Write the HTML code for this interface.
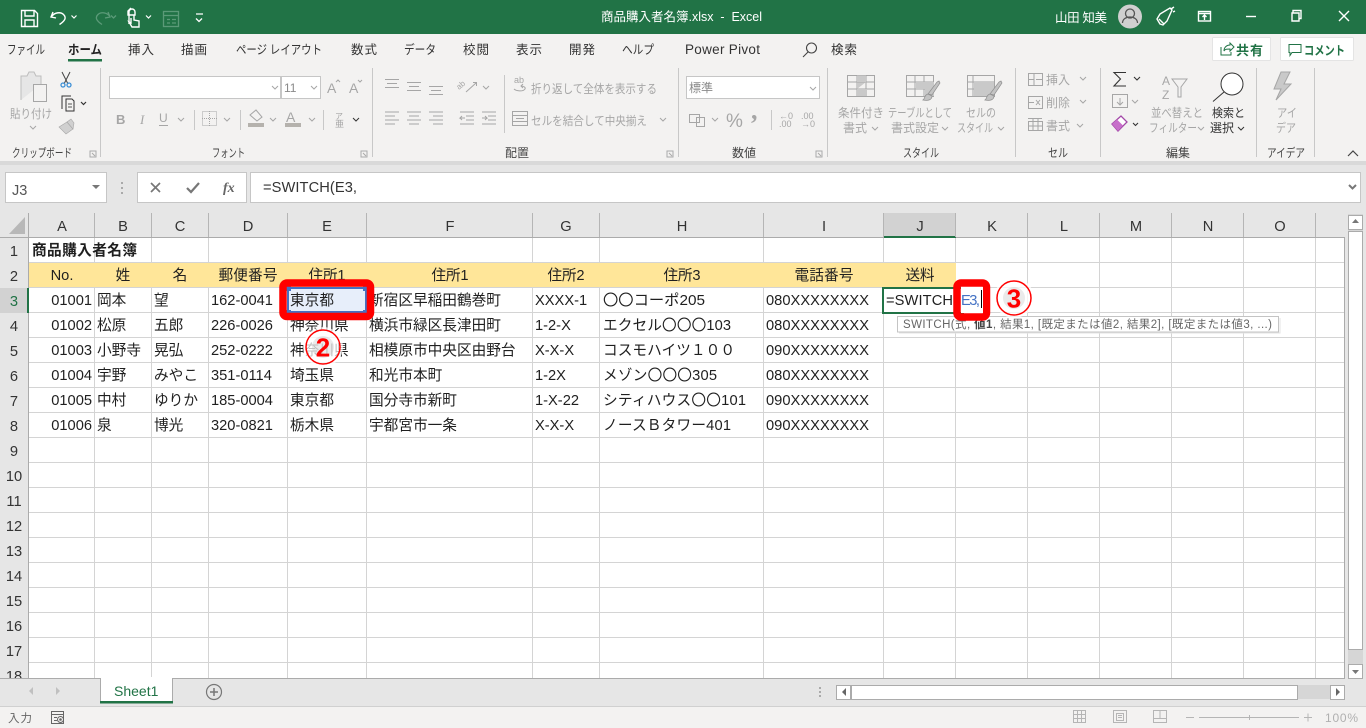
<!DOCTYPE html>
<html lang="ja"><head><meta charset="utf-8"><title>商品購入者名簿.xlsx - Excel</title>
<style>
html,body{margin:0;padding:0;background:#e6e6e6;overflow:hidden}
svg{display:block;position:absolute;left:0;top:0}
text{font-family:"Liberation Sans","Noto Sans CJK JP",sans-serif;white-space:pre}
.c text{font-size:14.67px;fill:#1f1f1f}
.r{font-size:12px;fill:#a6a6a6}
.k{font-size:12px;fill:#333}
.tab{font-size:12.5px;fill:#333}
.g{font-size:12px;fill:#444}
.h{font-size:14.67px;fill:#333;text-anchor:middle}
.ic{fill:none;stroke:#a6a6a6;stroke-width:1}
.wl{fill:none;stroke:#fff;stroke-width:1.4}
</style></head><body>
<svg width="1366" height="728" viewBox="0 0 1366 728" xmlns="http://www.w3.org/2000/svg">
<!-- backgrounds -->
<rect width="1366" height="728" fill="#e6e6e6"/>
<rect width="1366" height="34" fill="#217346"/>
<rect y="34" width="1366" height="127" fill="#f3f2f1"/>
<rect y="161" width="1366" height="4" fill="#d9d9d9"/>

<!-- QAT -->
<g class="wl">
<path d="M21.5 10.5h13l3 3v13h-16z"/><path d="M25 10.5v5.500h9v-5.500M25 26.500v-6.500h9v6.500"/>
<path d="M53 12l-2 5 5 1M51.500 16.500c3-4 9-5 12-2 3 3 2 6-4 10"/>
<path d="M71.500 15.500l2.500 2.500 2.500-2.500" stroke-width="1.200"/>
<path d="M129 24v-12a3 3 0 0 1 6 0v3h-7v-4l3-3M131 18v5l-2-1 3 5h7v-6l-5-1v-5"/>
<path d="M146 15.500l2.500 2.500 2.500-2.500" stroke-width="1.200"/>
<path d="M196 14h7M196 18.500l3 3 3-3" stroke-width="1.300"/>
</g>
<g fill="none" stroke="#5b9a78" stroke-width="1.300">
<path d="M108 12l2 5-5 1M110 16.500c-3-4-9-5-12-2-3 3-2 6 4 10"/>
<path d="M111 15.500l2.500 2.500 2.500-2.500"/>
<rect x="163.500" y="11.500" width="15" height="15"/><path d="M163.500 15.500h15M167 19.500h3M172 19.500h4M167 23h3M172 23h4"/>
</g>

<!-- Title -->
<text x="601" y="21" font-size="12.500" fill="#fff" textLength="161">商品購入者名簿.xlsx  -  Excel</text>
<text x="1055" y="22" font-size="12.500" fill="#fff" textLength="52">山田 知美</text>
<circle cx="1130" cy="16.500" r="12" fill="#d0d0d0"/>
<g fill="none" stroke="#555" stroke-width="1.300"><circle cx="1130" cy="13.500" r="4.500"/><path d="M1122.500 23c0-8 15-8 15 0"/></g>
<g class="wl">
<path d="M1160 24l3 1 4-4 5-11-2-2-10 6-3 5zM1159 19l5 5M1171 9l3-2M1173 12l2-1"/>
<rect x="1198.500" y="11.500" width="12" height="9.500"/><path d="M1198.500 13.500h12M1204.500 20v-5M1202.500 17l2-2 2 2"/>
<path d="M1246 16.500h10"/>
<path d="M1293 13v-2.500h8v8h-2.500M1293 13h6v8h-7v-8z"/>
<path d="M1339 11l10 10M1349 11l-10 10"/>
</g>

<!-- Tabs -->
<g class="tab">
<text x="7" y="54" textLength="38" lengthAdjust="spacingAndGlyphs">ファイル</text>
<text x="68" y="54" textLength="34" lengthAdjust="spacingAndGlyphs" font-weight="700" style="fill:#222">ホーム</text>
<text x="128" y="54" textLength="26">挿入</text>
<text x="181" y="54" textLength="26">描画</text>
<text x="236" y="54" textLength="86" lengthAdjust="spacingAndGlyphs">ページ レイアウト</text>
<text x="351" y="54" textLength="26">数式</text>
<text x="404" y="54" textLength="32" lengthAdjust="spacingAndGlyphs">データ</text>
<text x="463" y="54" textLength="26">校閲</text>
<text x="516" y="54" textLength="26">表示</text>
<text x="569" y="54" textLength="26">開発</text>
<text x="622" y="54" textLength="32" lengthAdjust="spacingAndGlyphs">ヘルプ</text>
<text x="685" y="54" textLength="75" style="font-size:13.5px">Power Pivot</text>
<text x="831" y="54" textLength="26">検索</text>
</g>
<rect x="68" y="59" width="34" height="2.500" fill="#217346"/>
<circle cx="811.500" cy="48" r="5" fill="none" stroke="#444" stroke-width="1.100"/><path d="M808 52l-5 5" stroke="#444" stroke-width="1.100"/>

<!-- Share/comment -->
<rect x="1212.500" y="37.500" width="58" height="23" rx="1" fill="#fff" stroke="#e4e4e4"/>
<rect x="1280.500" y="37.500" width="73" height="23" rx="1" fill="#fff" stroke="#e4e4e4"/>
<g fill="none" stroke="#217346" stroke-width="1"><path d="M1221 47v8h10v-3M1224 51c0-4 3-6 6-6v-2l4 4-4 4v-2c-3 0-5 0-6 2z"/><path d="M1289 44.500h12v8h-9l-2 3v-3h-1z"/></g>
<text x="1236" y="55" font-size="13" font-weight="700" fill="#217346" textLength="27">共有</text>
<text x="1304" y="55" font-size="12.500" font-weight="700" fill="#217346" textLength="41" lengthAdjust="spacingAndGlyphs">コメント</text>

<!-- Ribbon separators -->
<g fill="#c8c8c8">
<rect x="100" y="68" width="1" height="89"/><rect x="372" y="68" width="1" height="89"/><rect x="678" y="68" width="1" height="89"/><rect x="827" y="68" width="1" height="89"/><rect x="1015" y="68" width="1" height="89"/><rect x="1100" y="68" width="1" height="89"/><rect x="1256" y="68" width="1" height="89"/><rect x="1314" y="68" width="1" height="89"/>
<rect x="194" y="110" width="1" height="20"/><rect x="240" y="110" width="1" height="20"/><rect x="323" y="110" width="1" height="20"/><rect x="504" y="75" width="1" height="58"/><rect x="771" y="110" width="1" height="20"/>
</g>
<!-- Group labels -->
<g class="g">
<text x="12" y="157" textLength="60" lengthAdjust="spacingAndGlyphs">クリップボード</text>
<text x="212" y="157" textLength="33" lengthAdjust="spacingAndGlyphs">フォント</text>
<text x="505" y="157" textLength="24">配置</text>
<text x="732" y="157" textLength="24">数値</text>
<text x="903" y="157" textLength="36" lengthAdjust="spacingAndGlyphs">スタイル</text>
<text x="1048" y="157" textLength="20" lengthAdjust="spacingAndGlyphs">セル</text>
<text x="1166" y="157" textLength="24">編集</text>
<text x="1267" y="157" textLength="38" lengthAdjust="spacingAndGlyphs">アイデア</text>
</g>
<g fill="none" stroke="#aaa" stroke-width="1"><path d="M90 151h6v6h-6zM92 153l3 3"/><path d="M361 151h6v6h-6zM363 153l3 3"/><path d="M667 151h6v6h-6zM669 153l3 3"/><path d="M816 151h6v6h-6zM818 153l3 3"/></g>
<path d="M1348 156l5-5 5 5" fill="none" stroke="#444" stroke-width="1.200"/>

<!-- Clipboard -->
<g class="ic"><path d="M21 100V76h6l2-4h5l2 4h5v8" fill="#e6e6e6" stroke="#bdbdbd"/><rect x="33.500" y="84.500" width="13" height="17" fill="#f3f2f1" stroke="#a6a6a6"/></g>
<text x="10" y="118" class="r" textLength="42" lengthAdjust="spacingAndGlyphs">貼り付け</text>
<path d="M30 126l3 3 3-3" class="ic"/>
<g fill="none" stroke="#444"><path d="M62 72l6 12M70 72l-6 12"/></g>
<circle cx="63" cy="85" r="2" fill="none" stroke="#3c8fd6" stroke-width="1.300"/><circle cx="69" cy="85" r="2" fill="none" stroke="#3c8fd6" stroke-width="1.300"/>
<g fill="none" stroke="#333"><path d="M62 109V96h9M66 99h6l2 2v10h-8z"/><path d="M68 104h4M68 107h4" stroke="#555"/><path d="M81 102l2.500 2.500 2.500-2.500" stroke-width="1.200"/></g>
<g fill="#d0d0d0" stroke="#a6a6a6" stroke-width=".6"><path d="M59 127l8-5 6 7-7 5z"/><path d="M67 122l4-3 3 4-1 6z"/></g>

<!-- Font -->
<rect x="109.500" y="76.500" width="171" height="22" fill="#fff" stroke="#c6c6c6"/>
<rect x="281.500" y="76.500" width="39" height="22" fill="#fff" stroke="#c6c6c6"/>
<path d="M272 86l3 3 3-3M311 86l3 3 3-3" class="ic"/>
<text x="284" y="92" font-size="12" fill="#8a8a8a">11</text>
<text x="327" y="93" font-size="14" fill="#a6a6a6">A</text><text x="349" y="93" font-size="14" fill="#a6a6a6">A</text>
<path d="M336 82l2-2 2 2M358 80l2 2 2-2" class="ic"/>
<text x="116" y="124" font-size="13" font-weight="700" fill="#a6a6a6">B</text>
<text x="140" y="124" fill="#a6a6a6" style="font:italic 13px 'Liberation Serif',serif">I</text>
<text x="159" y="122" font-size="12" fill="#a6a6a6">U</text><path d="M159 125.500h9M178 118l3 3 3-3" class="ic"/>
<rect x="202.500" y="111.500" width="14" height="14" fill="none" stroke="#a6a6a6" stroke-dasharray="1 1"/><path d="M202 118.500h15M209.500 111v15" stroke="#a6a6a6" stroke-dasharray="1 1"/>
<path d="M224 118l3 3 3-3" class="ic"/>
<path d="M250 115l6-5 6 7-5 4z" class="ic"/><rect x="248" y="123" width="16" height="4" fill="#b5b2ad"/>
<path d="M270 118l3 3 3-3M309 118l3 3 3-3" class="ic"/>
<text x="286" y="122" font-size="14" fill="#a6a6a6">A</text><rect x="285" y="123" width="16" height="4" fill="#b5b2ad"/>
<text x="335" y="119" font-size="8" fill="#a6a6a6">ア</text><text x="335" y="127" font-size="9" fill="#a6a6a6">亜</text>
<path d="M353 118l3 3 3-3" fill="none" stroke="#333"/>

<!-- Alignment -->
<g class="ic">
<path d="M385 79.500h14M387 83.500h10M385 87.500h14M407 82.500h14M409 86.500h10M407 90.500h14M429 86.500h14M431 90.500h10M429 94.500h14"/>
<path d="M385 112h14M385 116h10M385 120h14M385 124h10M407 112h14M409 116h10M407 120h14M409 124h10M429 112h14M433 116h10M429 120h14M433 124h10"/>
<path d="M466 92l10-9M473 82.500h3.500v3.500M483 86l3 3 3-3"/>
<path d="M460 112h14M466 116h8M466 120h8M460 124h14M465 118h-5l2-2M462 120l-2-2M482 112h14M488 116h8M488 120h8M482 124h14M482 118h5l-2-2M485 120l2-2"/>
<rect x="512.500" y="111.500" width="15" height="14"/><path d="M512 115.500h15M512 121.500h15M516 118.500h8"/>
<path d="M514 89c2 2 9 3 11 0 1-2-2-3-4-3M523 84l-2 2 2 2"/>
<path d="M660 118l3 3 3-3"/>
</g>
<text x="514" y="83" font-size="9" fill="#a6a6a6">ab</text>
<text x="459" y="90" font-size="8" fill="#a6a6a6" transform="rotate(-40 459 90)">ab</text>
<text x="531" y="93" class="r" textLength="126" lengthAdjust="spacingAndGlyphs">折り返して全体を表示する</text>
<text x="531" y="125" class="r" textLength="116" lengthAdjust="spacingAndGlyphs">セルを結合して中央揃え</text>

<!-- Number -->
<rect x="686.500" y="76.500" width="133" height="22" fill="#fff" stroke="#c6c6c6"/>
<text x="689" y="92" font-size="12" fill="#8a8a8a">標準</text>
<path d="M810 87l3 3 3-3M712 118l3 3 3-3" class="ic"/>
<g class="ic"><rect x="689.500" y="114.500" width="10" height="8"/><rect x="696.500" y="117.500" width="8" height="9"/></g>
<text x="726" y="127" font-size="19" fill="#a6a6a6">%</text>
<text x="751" y="119" fill="#a6a6a6" style="font:700 26px 'Liberation Serif',serif">,</text>
<text x="779" y="119" font-size="9" fill="#a6a6a6">←0</text><text x="779" y="127" font-size="9" fill="#a6a6a6">.00</text>
<text x="801" y="119" font-size="9" fill="#a6a6a6">.00</text><text x="801" y="127" font-size="9" fill="#a6a6a6">→0</text>

<!-- Styles -->
<g stroke="#a6a6a6" fill="none">
<rect x="847.500" y="75.500" width="27" height="21"/><path d="M847 82h28M847 89h28M857 75v22M866 75v22"/>
<path d="M857 75.500h9v7h-9zM857 89h9v7h-9zM866 82h-9v7" fill="#c9c9c9" stroke="none"/><rect x="862" y="89" width="5" height="7" fill="#c9c9c9" stroke="none"/>
<rect x="906.500" y="75.500" width="27" height="21"/><path d="M906 82h28M906 89h28M915 75v22M924 75v22"/>
<rect x="925" y="82" width="9" height="14" fill="#c9c9c9" stroke="none"/><rect x="916" y="82" width="9" height="7" fill="#c9c9c9" stroke="none"/>
<rect x="967.500" y="75.500" width="27" height="21"/><path d="M967 82h28M967 89h10M973 75v22"/>
<rect x="974" y="82" width="20" height="14" fill="#c9c9c9" stroke="none"/>
</g>
<g fill="#c3c3c3" stroke="#8f8f8f" stroke-width=".7">
<path d="M928 94l9-12 2-1 1 2-8 12z"/><path d="M923 100c2-1 1-5 5-6l4 2c0 4-4 5-9 4z"/>
<path d="M990 94l9-12 2-1 1 2-8 12z"/><path d="M985 100c2-1 1-5 5-6l4 2c0 4-4 5-9 4z"/>
</g>
<g class="r">
<text x="838" y="117" textLength="46" lengthAdjust="spacingAndGlyphs">条件付き</text><text x="843" y="132" textLength="24">書式</text>
<text x="888" y="117" textLength="64" lengthAdjust="spacingAndGlyphs">テーブルとして</text><text x="891" y="132" textLength="48">書式設定</text>
<text x="966" y="117" textLength="30" lengthAdjust="spacingAndGlyphs">セルの</text><text x="957" y="132" textLength="36" lengthAdjust="spacingAndGlyphs">スタイル</text>
</g>
<path d="M872 127l3 3 3-3M942 127l3 3 3-3M998 127l3 3 3-3" class="ic"/>

<!-- Cells -->
<g class="ic">
<rect x="1028.500" y="73.500" width="14" height="12"/><path d="M1028 79.500h6M1036 79.500h6M1034 73v13"/>
<rect x="1028.500" y="96.500" width="14" height="12"/><path d="M1028 102.500h6M1036 100l4 5M1040 100l-4 5"/>
<rect x="1028.500" y="121.500" width="14" height="9"/><path d="M1028 118.500h14M1033 118v13M1038 118v13M1028 126h14"/>
<path d="M1080 77l3 3 3-3M1080 100l3 3 3-3M1077 124l3 3 3-3"/>
</g>
<g class="r">
<text x="1046" y="84" textLength="24">挿入</text><text x="1046" y="107" textLength="24">削除</text><text x="1046" y="130" textLength="24">書式</text>
</g>

<!-- Editing -->
<path d="M1126 72.500h-12l6.500 6.500-6.500 7h12" fill="none" stroke="#333" stroke-width="1.100"/>
<path d="M1134 77l3 3 3-3M1133 123l2.500 2.500 2.500-2.500" fill="none" stroke="#333" stroke-width="1.100"/>
<rect x="1112.500" y="94.500" width="15" height="13" class="ic" stroke="#999"/><path d="M1120 98v7M1117 102l3 3 3-3" class="ic"/><path d="M1132 100l3 3 3-3" class="ic"/>
<path d="M1112 124l9-8 6 6-9 9z" fill="#fff" stroke="#a348a8" stroke-width="1.300"/><path d="M1112 124l5-4.500 6 6-5 5.500z" fill="#c76fca"/>
<text x="1162" y="85" font-size="12" fill="#a6a6a6">A</text><text x="1162" y="99" font-size="12" fill="#a6a6a6">Z</text>
<path d="M1172 79h15l-6 8v10h-3V87z" class="ic"/>
<text x="1151" y="117" class="r" textLength="52" lengthAdjust="spacingAndGlyphs">並べ替えと</text><text x="1149" y="132" class="r" textLength="48" lengthAdjust="spacingAndGlyphs">フィルター</text>
<path d="M1198 127l3 3 3-3" class="ic"/>
<circle cx="1232" cy="84" r="11" fill="#fff" stroke="#333"/><path d="M1224 92l-11 9.500" stroke="#333"/>
<text x="1212" y="117" class="k" textLength="33" lengthAdjust="spacingAndGlyphs">検索と</text><text x="1210" y="132" class="k" textLength="24">選択</text>
<path d="M1238 127l3 3 3-3" fill="none" stroke="#333"/>
<!-- Ideas -->
<path d="M1290 72h-9l-7 17h7l-5 11 15-16h-7l6-12z" fill="#c9c9c9" stroke="#a6a6a6"/>
<text x="1277" y="117" class="r" textLength="20" lengthAdjust="spacingAndGlyphs">アイ</text><text x="1276" y="132" class="r" textLength="20" lengthAdjust="spacingAndGlyphs">デア</text>

<!-- Formula bar -->
<rect x="5.500" y="172.500" width="101" height="30" fill="#fff" stroke="#c6c6c6"/>
<text x="12" y="195" font-size="14.500" fill="#555">J3</text>
<path d="M92 185h8l-4 4z" fill="#777"/>
<g fill="#aaa"><rect x="121" y="182" width="2" height="2"/><rect x="121" y="187" width="2" height="2"/><rect x="121" y="192" width="2" height="2"/></g>
<rect x="137.500" y="172.500" width="109" height="30" fill="#fff" stroke="#c6c6c6"/>
<rect x="250.500" y="172.500" width="1110" height="30" fill="#fff" stroke="#c6c6c6"/>
<path d="M151 183l9 9M160 183l-9 9" stroke="#777" stroke-width="1.700"/>
<path d="M187 188l4 4 8-9" fill="none" stroke="#777" stroke-width="2.200"/>
<text x="223" y="192" fill="#666" style="font:italic 700 14px 'Liberation Serif',serif">fx</text>
<text x="263" y="192" font-size="14.670" fill="#333" textLength="94">=SWITCH(E3,</text>
<path d="M1349 185l3.500 3.500 3.500-3.500" fill="none" stroke="#777" stroke-width="2"/>

<!-- Column & row headers -->
<rect x="29" y="213" width="1317" height="25" fill="#e6e6e6"/>
<rect x="884" y="213" width="72" height="25" fill="#d2d2d2"/>
<rect x="0" y="288" width="29" height="25" fill="#d2d2d2"/>
<path d="M25 217v17H9z" fill="#b8b8b8"/>
<rect x="0" y="237" width="1345" height="1" fill="#ababab"/>
<rect x="28" y="213" width="1" height="466" fill="#ababab"/>
<rect x="884" y="236" width="72" height="2" fill="#217346"/>
<rect x="27" y="288" width="2" height="25" fill="#217346"/>
<g fill="#b5b5b5">
<rect x="94" y="213" width="1" height="24"/><rect x="151" y="213" width="1" height="24"/><rect x="208" y="213" width="1" height="24"/><rect x="287" y="213" width="1" height="24"/><rect x="366" y="213" width="1" height="24"/><rect x="532" y="213" width="1" height="24"/><rect x="599" y="213" width="1" height="24"/><rect x="763" y="213" width="1" height="24"/><rect x="883" y="213" width="1" height="24"/><rect x="955" y="213" width="1" height="24"/><rect x="1027" y="213" width="1" height="24"/><rect x="1099" y="213" width="1" height="24"/><rect x="1171" y="213" width="1" height="24"/><rect x="1243" y="213" width="1" height="24"/><rect x="1315" y="213" width="1" height="24"/>
</g>
<g class="h">
<text x="62" y="231">A</text><text x="123" y="231">B</text><text x="180" y="231">C</text><text x="248" y="231">D</text><text x="327" y="231">E</text><text x="450" y="231">F</text><text x="566" y="231">G</text><text x="682" y="231">H</text><text x="824" y="231">I</text><text x="920" y="231">J</text><text x="992" y="231">K</text><text x="1064" y="231">L</text><text x="1136" y="231">M</text><text x="1208" y="231">N</text><text x="1280" y="231">O</text>
</g>
<g class="h">
<text x="14" y="256">1</text><text x="14" y="281">2</text><text x="14" y="306" style="fill:#217346">3</text><text x="14" y="331">4</text><text x="14" y="356">5</text><text x="14" y="381">6</text><text x="14" y="406">7</text><text x="14" y="431">8</text><text x="14" y="456">9</text><text x="14" y="481">10</text><text x="14" y="506">11</text><text x="14" y="531">12</text><text x="14" y="556">13</text><text x="14" y="581">14</text><text x="14" y="606">15</text><text x="14" y="631">16</text><text x="14" y="656">17</text><text x="14" y="681">18</text>
</g>

<!-- Sheet -->
<rect x="29" y="238" width="1316" height="441" fill="#fff"/>
<rect x="29" y="263" width="927" height="25" fill="#ffe699"/>
<g fill="#d4d4d4">
<rect x="94" y="238" width="1" height="25"/><rect x="151" y="238" width="1" height="25"/><rect x="208" y="238" width="1" height="25"/><rect x="287" y="238" width="1" height="25"/><rect x="366" y="238" width="1" height="25"/><rect x="532" y="238" width="1" height="25"/><rect x="599" y="238" width="1" height="25"/><rect x="763" y="238" width="1" height="25"/><rect x="883" y="238" width="1" height="25"/><rect x="955" y="238" width="1" height="25"/>
<rect x="94" y="288" width="1" height="391"/><rect x="151" y="288" width="1" height="391"/><rect x="208" y="288" width="1" height="391"/><rect x="287" y="288" width="1" height="391"/><rect x="366" y="288" width="1" height="391"/><rect x="532" y="288" width="1" height="391"/><rect x="599" y="288" width="1" height="391"/><rect x="763" y="288" width="1" height="391"/><rect x="883" y="288" width="1" height="391"/><rect x="955" y="288" width="1" height="391"/>
<rect x="1027" y="238" width="1" height="441"/><rect x="1099" y="238" width="1" height="441"/><rect x="1171" y="238" width="1" height="441"/><rect x="1243" y="238" width="1" height="441"/><rect x="1315" y="238" width="1" height="441"/>
<rect x="29" y="262" width="1316" height="1"/><rect x="956" y="287" width="389" height="1"/><rect x="29" y="312" width="1316" height="1"/><rect x="29" y="337" width="1316" height="1"/><rect x="29" y="362" width="1316" height="1"/><rect x="29" y="387" width="1316" height="1"/><rect x="29" y="412" width="1316" height="1"/><rect x="29" y="437" width="1316" height="1"/><rect x="29" y="462" width="1316" height="1"/><rect x="29" y="487" width="1316" height="1"/><rect x="29" y="512" width="1316" height="1"/><rect x="29" y="537" width="1316" height="1"/><rect x="29" y="562" width="1316" height="1"/><rect x="29" y="587" width="1316" height="1"/><rect x="29" y="612" width="1316" height="1"/><rect x="29" y="637" width="1316" height="1"/><rect x="29" y="662" width="1316" height="1"/>
<rect x="29" y="287" width="927" height="1"/>
</g>
<rect x="1344" y="237" width="1" height="442" fill="#ababab"/>

<!-- Cell data -->
<g class="c">
<text x="32" y="255" font-weight="700" textLength="105">商品購入者名簿</text>
<g text-anchor="middle">
<text x="62" y="280">No.</text><text x="123" y="280">姓</text><text x="180" y="280">名</text><text x="248" y="280" textLength="59">郵便番号</text><text x="327" y="280" textLength="37">住所1</text><text x="450" y="280" textLength="37">住所1</text><text x="566" y="280" textLength="37">住所2</text><text x="682" y="280" textLength="37">住所3</text><text x="824" y="280" textLength="59">電話番号</text><text x="920" y="280" textLength="29">送料</text>
</g>
<g text-anchor="end"><text x="92" y="305">01001</text><text x="92" y="330">01002</text><text x="92" y="355">01003</text><text x="92" y="380">01004</text><text x="92" y="405">01005</text><text x="92" y="430">01006</text></g>
<text x="97" y="305">岡本</text><text x="97" y="330">松原</text><text x="97" y="355">小野寺</text><text x="97" y="380">宇野</text><text x="97" y="405">中村</text><text x="97" y="430">泉</text>
<text x="154" y="305">望</text><text x="154" y="330">五郎</text><text x="154" y="355">晃弘</text><text x="154" y="380">みやこ</text><text x="154" y="405">ゆりか</text><text x="154" y="430">博光</text>
<text x="211" y="305">162-0041</text><text x="211" y="330">226-0026</text><text x="211" y="355">252-0222</text><text x="211" y="380">351-0114</text><text x="211" y="405">185-0004</text><text x="211" y="430">320-0821</text>
<text x="290" y="330">神奈川県</text><text x="290" y="355">神奈川県</text><text x="290" y="380">埼玉県</text><text x="290" y="405">東京都</text><text x="290" y="430">栃木県</text>
<text x="369" y="305">新宿区早稲田鶴巻町</text><text x="369" y="330">横浜市緑区長津田町</text><text x="369" y="355">相模原市中央区由野台</text><text x="369" y="380">和光市本町</text><text x="369" y="405">国分寺市新町</text><text x="369" y="430">宇都宮市一条</text>
<text x="535" y="305">XXXX-1</text><text x="535" y="330">1-2-X</text><text x="535" y="355">X-X-X</text><text x="535" y="380">1-2X</text><text x="535" y="405">1-X-22</text><text x="535" y="430">X-X-X</text>
<text x="603" y="305" textLength="102" lengthAdjust="spacingAndGlyphs">〇〇コーポ205</text><text x="603" y="330" textLength="128">エクセル〇〇〇103</text><text x="603" y="355" textLength="132">コスモハイツ１００</text><text x="603" y="380" textLength="114">メゾン〇〇〇305</text><text x="603" y="405" textLength="143">シティハウス〇〇101</text><text x="603" y="430" textLength="128">ノースＢタワー401</text>
<text x="766" y="305" textLength="103">080XXXXXXXX</text><text x="766" y="330" textLength="103">080XXXXXXXX</text><text x="766" y="355" textLength="103">090XXXXXXXX</text><text x="766" y="380" textLength="103">080XXXXXXXX</text><text x="766" y="405" textLength="103">090XXXXXXXX</text><text x="766" y="430" textLength="103">090XXXXXXXX</text>
</g>

<!-- E3 selection -->
<rect x="287" y="287" width="80" height="26" fill="#e7eefa"/>
<rect x="288" y="288" width="78" height="24" fill="none" stroke="#4472c4" stroke-width="2"/>
<rect x="286" y="286" width="5" height="5" fill="#4472c4"/><rect x="363" y="286" width="5" height="5" fill="#4472c4"/><rect x="286" y="310" width="5" height="5" fill="#4472c4"/><rect x="363" y="310" width="5" height="5" fill="#4472c4"/>
<text x="290" y="305" font-size="14.670" fill="#1f1f1f">東京都</text>
<rect x="283" y="283" width="87.500" height="33.500" rx="4" fill="none" stroke="#f00" stroke-width="7.500"/>

<!-- Circle 2 -->
<circle cx="323" cy="347" r="20" fill="#fff" opacity=".72"/>
<circle cx="323" cy="347" r="11" fill="#bbb" opacity=".3"/>
<circle cx="323" cy="347" r="17" fill="none" stroke="#f00" stroke-width="1.500"/>
<text x="323" y="356.500" font-size="26" font-weight="700" fill="#f00" text-anchor="middle">2</text>

<!-- J3 editing -->
<rect x="883" y="288" width="80" height="25" fill="#fff" stroke="#217346" stroke-width="2"/>
<rect x="963" y="288" width="25" height="25" fill="#fff"/>
<text x="886" y="305" font-size="14.670" fill="#1f1f1f" textLength="67">=SWITCH</text>

<!-- Tooltip -->
<rect x="897.500" y="316.500" width="381" height="15.500" fill="#fff" stroke="#c4c4c4"/>
<path d="M1280 318v15H899" fill="none" stroke="#e3e3e3"/>
<text x="903" y="328" font-size="11.500" fill="#666" textLength="369">SWITCH(式, <tspan font-weight="700" fill="#444">値1</tspan>, 結果1, [既定または値2, 結果2], [既定または値3, ...)</text>

<!-- Red J3 -->
<rect x="957" y="283" width="29.500" height="34" rx="4" fill="none" stroke="#f00" stroke-width="7.500"/>
<rect x="961" y="287" width="22" height="26" fill="#fff"/>
<text x="961" y="305" font-size="14.670" fill="#4472c4" textLength="19">E3,</text>
<rect x="981" y="290" width="1" height="18" fill="#000"/>

<!-- Circle 3 -->
<circle cx="1014" cy="298" r="20" fill="#fff" opacity=".75"/>
<circle cx="1014" cy="298" r="11" fill="#bbb" opacity=".3"/>
<circle cx="1014" cy="298" r="17" fill="none" stroke="#f00" stroke-width="1.500"/>
<text x="1014" y="307.500" font-size="26" font-weight="700" fill="#f00" text-anchor="middle">3</text>

<!-- Vertical scrollbar -->
<rect x="1345" y="213" width="21" height="466" fill="#e6e6e6"/>
<rect x="1348" y="214" width="15" height="450" fill="#d6d6d6"/>
<rect x="1348.500" y="231.500" width="14" height="418" fill="#fff" stroke="#ababab"/>
<rect x="1348.500" y="215.500" width="14" height="14" fill="#fff" stroke="#ababab"/>
<path d="M1352 223h7l-3.500-4z" fill="#777"/>
<rect x="1348.500" y="664.500" width="14" height="14" fill="#fff" stroke="#ababab"/>
<path d="M1352 670h7l-3.500 4z" fill="#777"/>

<!-- Sheet tabs -->
<rect x="0" y="679" width="1366" height="27" fill="#e6e6e6"/>
<rect x="0" y="678" width="1345" height="1" fill="#ababab"/>
<path d="M33 687v8l-4-4zM56 687v8l4-4z" fill="#c0c0c0"/>
<path d="M100.500 678.500V702h72V678.500" fill="#fff" stroke="#ababab"/>
<rect x="100" y="701" width="73" height="2.500" fill="#217346"/>
<rect x="101" y="677" width="71" height="3" fill="#fff"/>
<text x="114" y="696" font-size="14" fill="#217346">Sheet1</text>
<circle cx="214" cy="692" r="7.500" fill="none" stroke="#777" stroke-width="1.200"/><path d="M210 692h8M214 688v8" stroke="#777" stroke-width="1.500"/>
<g fill="#aaa"><rect x="819" y="687" width="2" height="2"/><rect x="819" y="691" width="2" height="2"/><rect x="819" y="695" width="2" height="2"/></g>
<rect x="1297" y="685" width="33" height="14" fill="#d6d6d6"/>
<rect x="836.500" y="685.500" width="14" height="14" fill="#fff" stroke="#ababab"/>
<path d="M846 688v8l-4-4z" fill="#666"/>
<rect x="851.500" y="685.500" width="446" height="14" fill="#fff" stroke="#ababab"/>
<rect x="1330.500" y="685.500" width="14" height="14" fill="#fff" stroke="#ababab"/>
<path d="M1336 688v8l4-4z" fill="#666"/>

<!-- Status bar -->
<rect x="0" y="706" width="1366" height="22" fill="#f3f2f1"/>
<rect x="0" y="706" width="1366" height="1" fill="#d0d0d0"/>
<text x="8" y="722" font-size="11.500" fill="#666" textLength="24">入力</text>
<g fill="none" stroke="#666"><rect x="51.500" y="711.500" width="12" height="12"/><path d="M51 714.500h12M54 717.500h3M54 720.500h3"/><circle cx="60.500" cy="719.500" r="3" fill="#f3f2f1"/></g>
<circle cx="60.500" cy="719.500" r="1.300" fill="#666"/>
<g fill="none" stroke="#b5b5b5">
<rect x="1073.500" y="710.500" width="12" height="12"/><path d="M1073 714.500h13M1073 718.500h13M1077.500 710v13M1081.500 710v13"/>
<rect x="1113.500" y="710.500" width="13" height="12"/><rect x="1116.500" y="713.500" width="7" height="7"/><path d="M1118 715.500h4M1118 717.500h4"/>
<rect x="1153.500" y="710.500" width="13" height="12"/><path d="M1153 718.500h13M1160 710v8"/>
<path d="M1186 717.500h8M1304 717.500h8M1308 713.500v8"/>
<path d="M1199 717.500h100M1249.500 715v5"/>
</g>
<text x="1325" y="722" font-size="12" fill="#b0b0b0" textLength="33">100%</text>
</svg>
</body></html>
